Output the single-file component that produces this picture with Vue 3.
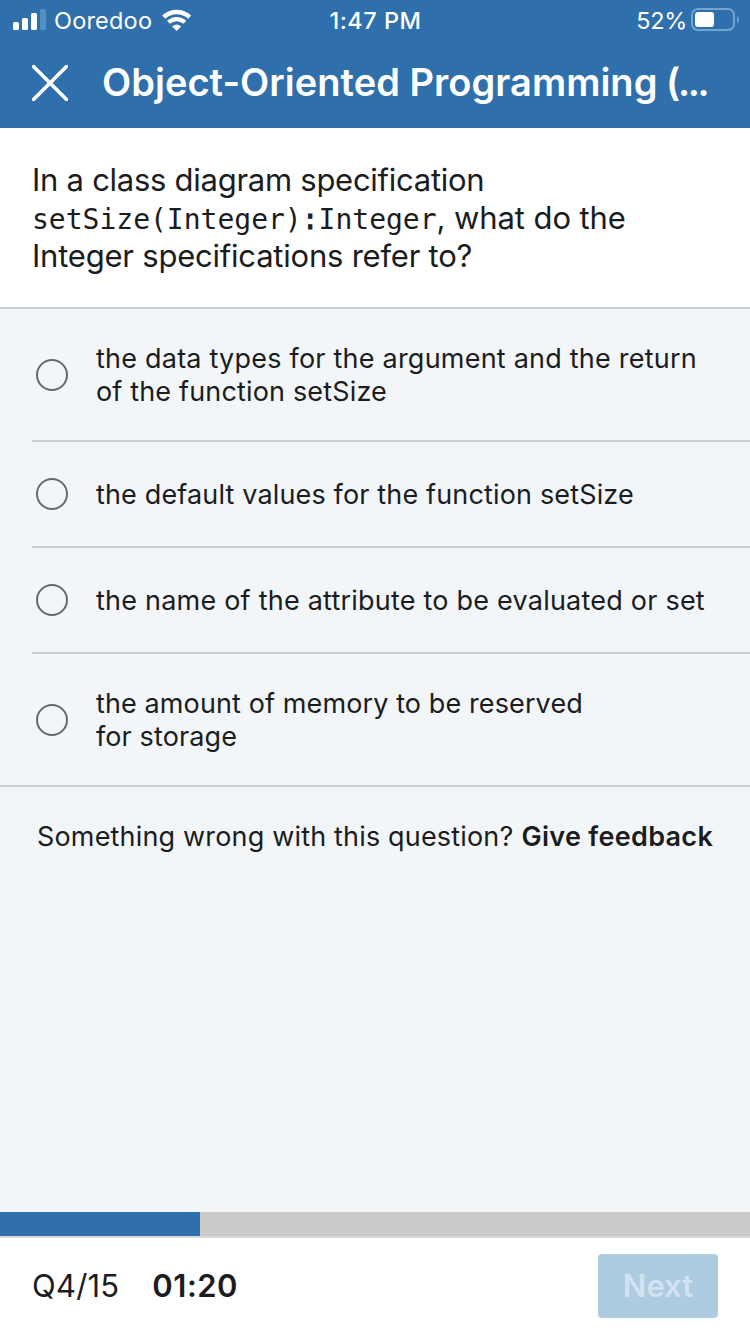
<script setup>
const options = [
  [{ text: 'the data types for the argument and the return', tracking: 0.22 }, { text: 'of the function setSize', tracking: 0.16 }],
  [{ text: 'the default values for the function setSize', tracking: 0.15 }],
  [{ text: 'the name of the attribute to be evaluated or set', tracking: 0.22 }],
  [{ text: 'the amount of memory to be reserved', tracking: 0.11 }, { text: 'for storage', tracking: 0.11 }],
]
</script>

<template>
  <div class="screen">
    <header>
      <div class="status">
        <div class="carrier">
          <svg class="signal" width="33" height="22" viewBox="0 0 33 22">
            <rect x="0" y="13" width="6" height="8" rx="1.6" fill="#fff" />
            <rect x="9" y="9" width="6" height="12" rx="1.6" fill="#fff" />
            <rect x="18" y="4" width="6" height="17" rx="1.6" fill="#fff" />
            <rect x="27" y="0" width="6" height="21" rx="1.6" fill="#5091c2" />
          </svg>
          <span class="operator">Ooredoo</span>
          <svg class="wifi" width="30" height="22" viewBox="0 0 30 22">
            <path d="M1.7 8.2 A19 19 0 0 1 27.7 8.2" fill="none" stroke="#fff" stroke-width="4.4" />
            <path d="M6.5 13.3 A12 12 0 0 1 22.9 13.3" fill="none" stroke="#fff" stroke-width="4.2" />
            <path d="M10.2 17.4 Q14.7 13.4 19.2 17.4 L14.7 22Z" fill="#fff" />
          </svg>
        </div>
        <span class="clock">1:47 PM</span>
        <div class="power">
          <span class="percent">52%</span>
          <svg width="48" height="24" viewBox="0 0 48 24">
            <rect x="1" y="1" width="42" height="21" rx="6" fill="none" stroke="#73a5cf" stroke-width="2" />
            <rect x="4" y="4" width="19" height="15" rx="3" fill="#fff" />
            <path d="M46 8 Q48 9 48 11.5 Q48 14 46 15Z" fill="#73a5cf" />
          </svg>
        </div>
      </div>
      <div class="titlebar">
        <svg class="close" width="36" height="36" viewBox="0 0 36 36"><path d="M1.5 1.5 34.5 34.5M34.5 1.5 1.5 34.5" stroke="#fff" stroke-width="3.6" stroke-linecap="square" /></svg>
        <h1>Object-Oriented Programming <span class="dots">(...</span></h1>
      </div>
    </header>
    <section class="question">
      <p class="q1">In a class diagram specification</p>
      <p class="q2"><code>setSize(Integer)<span class="colon">:</span>Integer</code><span>, what do the</span></p>
      <p class="q3">Integer specifications refer to?</p>
    </section>
    <main>
      <div class="options">
        <label v-for="(lines, i) in options" :key="i" class="option" :class="{ tall: lines.length > 1 }">
          <span class="radio"></span>
          <span class="answer">
            <span v-for="line in lines" :key="line.text" :style="{ letterSpacing: line.tracking + 'px' }">{{ line.text }}</span>
          </span>
        </label>
      </div>
      <p class="feedback"><span>Something wrong with this question?</span><b>Give feedback</b></p>
    </main>
    <div class="progress"><div class="bar"></div></div>
    <footer>
      <span class="count">Q4/15</span>
      <b class="timer">01:20</b>
      <button>Next</button>
    </footer>
  </div>
</template>

<style>
body { margin: 0; }
</style>
<style scoped>
* { box-sizing: border-box; }
.screen { width: 750px; height: 1334px; display: flex; flex-direction: column; background: #f2f6f9; font-family: Inter, "Liberation Sans", sans-serif; color: #1b1c1e; overflow: hidden; white-space: nowrap; }
p, h1 { margin: 0; }
header { height: 128px; background: #2f70ac; color: #fff; flex: none; }
.status { height: 40px; display: grid; grid-template-columns: 1fr auto 1fr; align-items: center; font-size: 23.5px; padding: 0 11px 0 13px; }
.carrier, .power { display: flex; align-items: center; }
.power { justify-content: flex-end; gap: 4px; }
.percent { letter-spacing: -.3px; }
.operator { margin: 0 10px 0 8px; letter-spacing: .2px; }
.clock { font-weight: 500; letter-spacing: .5px; margin-left: -1px; }
.titlebar { display: flex; align-items: center; height: 86px; padding-left: 32px; }
h1 { font-size: 38px; font-weight: 600; margin-left: 34px; letter-spacing: .03px; position: relative; top: -1px; }
.dots { letter-spacing: -2.3px; margin-left: -1px; }
.question { height: 181px; flex: none; background: #fff; border-bottom: 2px solid #cccfd2; padding: 33px 32px 0; font-size: 31px; line-height: 38px; }
.question p { height: 38px; }
.q1 { letter-spacing: -.27px; }
.q2 > span { letter-spacing: -.1px; }
.q3 { letter-spacing: -.22px; }
code { font-family: "DejaVu Sans Mono", monospace; font-size: 28px; line-height: 1; }
.colon { -webkit-text-stroke: .8px currentColor; }
main { flex: 1; min-height: 0; }
.options { border-bottom: 2px solid #cccfd2; }
.option { display: flex; align-items: center; height: 106px; margin-left: 32px; padding-left: 4px; border-bottom: 2px solid #cccfd2; }
.option.tall { height: 133px; }
.option:last-child { border-bottom: 0; height: 131px; }
.radio { width: 32px; height: 32px; border: 2px solid #68696b; border-radius: 50%; margin-right: 28px; }
.answer { display: flex; flex-direction: column; font-size: 27px; line-height: 33px; }
.feedback { display: flex; gap: 8px; padding: 33px 0 0 37px; font-size: 27px; line-height: 33px; letter-spacing: .17px; }
.feedback b { font-weight: 600; letter-spacing: .3px; }
.progress { height: 26px; background: #cbcbcb; border-bottom: 2px solid #d9d9d9; flex: none; }
.bar { width: 200px; height: 24px; background: #2f70ac; }
footer { height: 96px; flex: none; background: #fff; display: flex; align-items: center; padding: 0 32px 1px; font-size: 31px; }
.count { letter-spacing: .2px; }
.timer { margin-left: 33px; font-weight: 600; letter-spacing: .5px; }
button { margin: 1px 0 0 auto; width: 120px; height: 64px; border: 0; border-radius: 4px; background: #adcce1; color: #d2e2f0; font: 600 31px Inter, sans-serif; padding: 0 0 2px; }
</style>
